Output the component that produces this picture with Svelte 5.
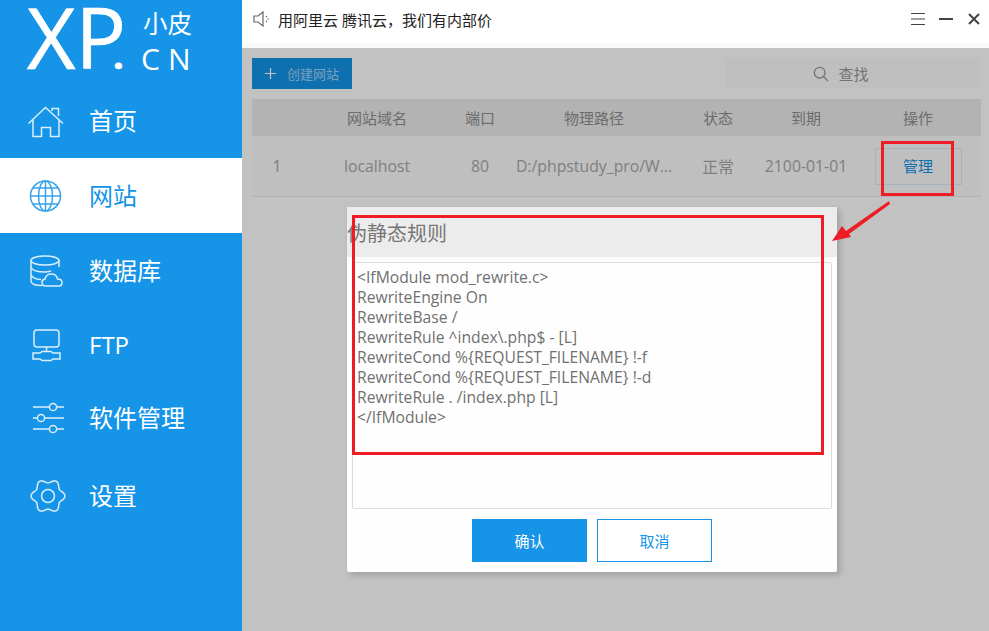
<script>
    const rules = [
        "<IfModule mod_rewrite.c>",
        "RewriteEngine On",
        "RewriteBase /",
        "RewriteRule ^index\\.php$ - [L]",
        "RewriteCond %{REQUEST_FILENAME} !-f",
        "RewriteCond %{REQUEST_FILENAME} !-d",
        "RewriteRule . /index.php [L]",
        "</IfModule>"
    ];

    const columns = ["", "网站域名", "端口", "物理路径", "状态", "到期", "操作"];
    const site = ["1", "localhost", "80", "D:/phpstudy_pro/W...", "正常", "2100-01-01"];

    // gear outline is a wavy circle
    function gearPath() {
        let d = "";
        for (let i = 0; i <= 120; i++) {
            const a = (i / 120) * Math.PI * 2;
            const r = 15 + 1.9 * Math.cos(6 * a);
            const x = 18 + r * Math.cos(a);
            const y = 18 + r * Math.sin(a);
            d += (i === 0 ? "M" : "L") + x.toFixed(2) + " " + y.toFixed(2);
        }
        return d + "Z";
    }
</script>

<div class="app">
    <aside class="sidebar">
        <div class="logo">
            <span class="logo-xp">XP<span class="logo-dot">.</span></span>
            <span class="logo-side">
                <span class="logo-cn">小皮</span>
                <span class="logo-en">CN</span>
            </span>
        </div>
        <nav>
            <div class="item">
                <svg viewBox="0 0 36 36" class="icon">
                    <path d="M0.5 20.5L17.5 4.5L35 20.5M5 17V33.5H13.5V24.5H22.5V33.5H31V17M24 8V5.5H30.5V13" />
                </svg>
                <span>首页</span>
            </div>
            <div class="item active">
                <svg viewBox="0 0 36 36" class="icon">
                    <circle cx="17.5" cy="18" r="15" />
                    <ellipse cx="17.5" cy="18" rx="7" ry="15" />
                    <path d="M17.5 3V33M2.5 18H32.5M5 10H30M5 26H30" />
                </svg>
                <span>网站</span>
            </div>
            <div class="item">
                <svg viewBox="0 0 36 36" class="icon">
                    <ellipse cx="17" cy="7.5" rx="14" ry="4.5" />
                    <path d="M3 7.5V28Q3 32.5 14 32.5M31 7.5V14M3 14.5Q5 19 17 19Q20 19 23 18M3 22Q5 26 13 26.5" />
                    <path d="M18 33Q14 33 14 29.5Q14 26.5 17 26Q18 21 23.5 21Q28.5 21 29.5 26Q34 26 34 29.5Q34 33 31 33Z" />
                </svg>
                <span>数据库</span>
            </div>
            <div class="item">
                <svg viewBox="0 0 36 36" class="icon">
                    <rect x="6" y="2" width="25" height="17" rx="3" />
                    <path d="M18.5 19V24M5 25H12L14 23.5H23L25 25H32V31H25L23 32.5H14L12 31H5Z" />
                </svg>
                <span>FTP</span>
            </div>
            <div class="item tight">
                <svg viewBox="0 0 36 36" class="icon">
                    <path d="M5 7H21M29 7H36M5 18H9M17 18H36M5 29H21M29 29H36" />
                    <circle cx="25" cy="7" r="3.6" />
                    <circle cx="13" cy="18" r="3.6" />
                    <circle cx="25" cy="29" r="3.6" />
                </svg>
                <span>软件管理</span>
            </div>
            <div class="item">
                <svg viewBox="0 0 36 36" class="icon gear">
                    <path d={gearPath()} />
                    <circle cx="18" cy="18" r="6.5" />
                </svg>
                <span>设置</span>
            </div>
        </nav>
    </aside>

    <main class="main">
        <header class="topbar">
            <svg viewBox="0 0 18 18" class="speaker">
                <path d="M1 6H5L10 2V16L5 12H1Z" />
                <path d="M13 6L14 7M14.5 9H16M13 12L14 11" />
            </svg>
            <span class="notice">用阿里云 腾讯云，我们有内部价</span>
            <div class="controls">
                <svg viewBox="0 0 14 12" class="menu"><path d="M0 0.5H14M0 6H14M0 11.5H14" /></svg>
                <svg viewBox="0 0 14 12" class="minus"><path d="M0 6H14" /></svg>
                <svg viewBox="0 0 12 12" class="close"><path d="M1 1L11 11M11 1L1 11" /></svg>
            </div>
        </header>

        <section class="content">
            <div class="toolbar">
                <button class="create">
                    <svg viewBox="0 0 14 14"><path d="M7 1V13M1 7H13" /></svg>
                    创建网站
                </button>
                <div class="search">
                    <svg viewBox="0 0 18 18"><circle cx="7.5" cy="7.5" r="6" /><path d="M12 12L17 17" /></svg>
                    查找
                </div>
            </div>

            <div class="table">
                <div class="row head">
                    {#each columns as col}
                        <div class="cell">{col}</div>
                    {/each}
                </div>
                <div class="row body">
                    {#each site as val}
                        <div class="cell">{val}</div>
                    {/each}
                    <div class="cell"><span class="manage">管理</span></div>
                </div>
            </div>

            <div class="overlay"></div>

            <div class="modal">
                <div class="modal-title">伪静态规则</div>
                <div class="rules">
                    {#each rules as line}
                        <div>{line}</div>
                    {/each}
                </div>
                <div class="actions">
                    <button class="ok">确认</button>
                    <button class="cancel">取消</button>
                </div>
            </div>
        </section>
    </main>

    <!-- red marks drawn on top of the screenshot -->
    <svg class="marks" viewBox="0 0 989 631">
        <rect x="353.5" y="216.5" width="469" height="237" />
        <rect x="882.5" y="142.5" width="70" height="52" />
        <polygon points="832,241 842,226 846,231 889,201 890,204 849,234 851,237" />
    </svg>
</div>

<style>
    :global(body) {
        margin: 0;
        font-family: "Open Sans", "Noto Sans CJK SC", sans-serif;
    }

    .app {
        position: relative;
        display: flex;
        width: 989px;
        height: 631px;
        overflow: hidden;
        background: #fff;
    }

    .sidebar {
        width: 242px;
        flex-shrink: 0;
        background: #1594e8;
        color: #fff;
    }

    .logo {
        display: flex;
        height: 83px;
        box-sizing: border-box;
        padding-left: 27px;
    }

    .logo-xp {
        width: 102px;
        flex-shrink: 0;
        white-space: nowrap;
        font-size: 84px;
        line-height: 74px;
        -webkit-text-stroke: 0.7px #fff;
    }

    .logo-dot {
        margin-left: -13px;
        font-weight: 700;
        font-size: 38px;
    }

    .logo-side {
        display: flex;
        flex-direction: column;
        margin-left: 14px;
        padding-top: 9px;
    }

    .logo-cn {
        font-size: 24.5px;
        line-height: 30px;
    }

    .logo-en {
        font-size: 30px;
        line-height: 36px;
        letter-spacing: 8px;
        margin: 2px 0 0 -2px;
    }

    .item {
        display: flex;
        align-items: center;
        gap: 26px;
        height: 75px;
        padding-left: 28px;
        font-size: 24px;
        box-sizing: border-box;
    }

    .item span {
        margin: 0 0 2px -1px;
    }

    .item.tight {
        padding-bottom: 6px;
    }

    .item.active {
        background: #fff;
        color: #1594e8;
    }

    .icon {
        width: 36px;
        height: 36px;
        flex-shrink: 0;
        fill: none;
        stroke: currentColor;
        stroke-width: 1.5;
        opacity: 0.85;
    }

    .gear {
        transform: translateX(2px);
    }

    .main {
        flex: 1;
        display: flex;
        flex-direction: column;
        min-width: 0;
    }

    .topbar {
        display: flex;
        align-items: center;
        height: 38px;
        padding: 0 9px 5px 11px;
        border-bottom: 5px solid #f9f9f9;
        font-size: 15px;
        color: #222;
    }

    .speaker {
        width: 18px;
        height: 18px;
        fill: none;
        stroke: #666;
        stroke-width: 1.2;
        margin-right: 7px;
    }

    .controls {
        display: flex;
        align-items: center;
        gap: 14px;
        margin-left: auto;
    }

    .menu, .minus {
        width: 14px;
        height: 12px;
        fill: none;
        stroke: #444;
        stroke-width: 1;
    }

    .minus {
        stroke-width: 2;
    }

    .close {
        width: 12px;
        height: 12px;
        fill: none;
        stroke: #444;
        stroke-width: 2;
        margin-left: 1px;
    }

    .content {
        position: relative;
        flex: 1;
        background: #fff;
        padding: 10px 8px 0 10px;
    }

    .toolbar {
        display: flex;
        justify-content: space-between;
        height: 31px;
    }

    .create {
        display: flex;
        align-items: center;
        gap: 10px;
        width: 100px;
        padding: 0 0 0 12px;
        border: none;
        background: #1594e8;
        color: rgba(255, 255, 255, 0.6);
        font-size: 13px;
        font-family: inherit;
    }

    .create svg {
        width: 13px;
        height: 13px;
        fill: none;
        stroke: #fff;
        stroke-width: 1.3;
    }

    .search {
        display: flex;
        align-items: center;
        justify-content: center;
        gap: 9px;
        width: 255px;
        background: #fbfbfb;
        color: #999;
        font-size: 15px;
        padding-right: 25px;
        box-sizing: border-box;
    }

    .search svg {
        width: 16px;
        height: 16px;
        fill: none;
        stroke: #999;
        stroke-width: 1.5;
    }

    .table {
        margin-top: 10px;
        font-size: 15px;
    }

    .row {
        display: grid;
        grid-template-columns: 50px 150px 56px 172px 76px 100px 124px;
        align-items: center;
        text-align: center;
    }

    .row.head {
        height: 37px;
        background: #ebebeb;
        color: #8f8f8f;
    }

    .row.body {
        height: 60px;
        background: #fbfbfb;
        border-bottom: 1px solid #eaeaea;
        color: #a8a8a8;
        font-size: 15.8px;
    }

    .cell {
        white-space: nowrap;
    }

    .manage {
        display: inline-block;
        width: 85px;
        height: 35px;
        line-height: 35px;
        font-size: 15px;
        border: 1px solid #d8ecfa;
        color: #1594e8;
    }

    .overlay {
        position: absolute;
        inset: 0;
        background: rgba(0, 0, 0, 0.24);
    }

    .modal {
        position: absolute;
        left: 105px;
        top: 159px;
        width: 490px;
        height: 365px;
        background: #fefefe;
        border-radius: 2px;
        box-shadow: 3px 3px 6px rgba(0, 0, 0, 0.18);
    }

    .modal-title {
        height: 50px;
        line-height: 54px;
        background: #ececec;
        color: #777;
        font-size: 20px;
    }

    .rules {
        height: 247px;
        box-sizing: border-box;
        margin: 5px 5px 0;
        padding: 4px;
        border: 1px solid #ddd;
        border-radius: 2px;
        font-size: 15.7px;
        line-height: 20px;
        color: #707070;
    }

    .actions {
        display: flex;
        justify-content: center;
        gap: 10px;
        margin-top: 10px;
    }

    .actions button {
        width: 115px;
        height: 43px;
        font-size: 15px;
        font-family: inherit;
    }

    .ok {
        border: none;
        background: #1594e8;
        color: #fff;
    }

    .cancel {
        border: 1px solid #1594e8;
        background: #fff;
        color: #1594e8;
    }

    .marks {
        position: absolute;
        inset: 0;
        width: 989px;
        height: 631px;
        pointer-events: none;
    }

    .marks rect {
        fill: none;
        stroke: #ee1c25;
        stroke-width: 3;
    }

    .marks polygon {
        fill: #ee1c25;
    }
</style>
